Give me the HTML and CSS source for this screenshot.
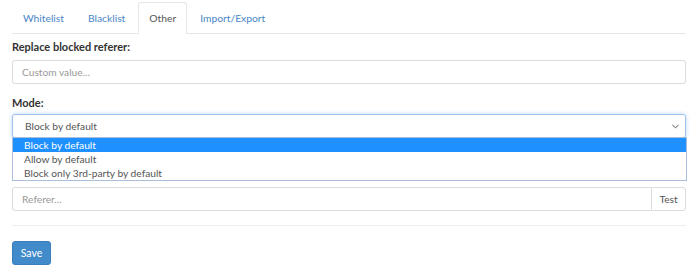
FILE: index.html
```html
<!DOCTYPE html>
<html lang="en">
    <head>
        <meta charset="UTF-8">
        <meta name="viewport" content="width=device-width, initial-scale=1.0">
        <title>Options</title>
        <link rel="stylesheet" href="styles.css">
    </head>
    <body>
        <ul class="tabs">
            <li class="tab"><a href="#">Whitelist</a></li>
            <li class="tab"><a href="#">Blacklist</a></li>
            <li class="tab active"><a href="#">Other</a></li>
            <li class="tab"><a href="#">Import/Export</a></li>
        </ul>

        <div class="pane">
            <label class="label">Replace blocked referer:</label>
            <input class="field" type="text" placeholder="Custom value...">

            <label class="label mode-label">Mode:</label>
            <div class="select-wrap">
                <div class="select">
                    <span>Block by default</span>
                    <svg class="caret" width="7" height="5" viewBox="0 0 7 5"><path d="M0.5 0.8 L3.5 3.8 L6.5 0.8" fill="none" stroke="#888" stroke-width="1.1"/></svg>
                </div>
                <ul class="options">
                    <li class="option selected">Block by default</li>
                    <li class="option">Allow by default</li>
                    <li class="option">Block only 3rd-party by default</li>
                </ul>
            </div>

            <div class="input-group">
                <input class="field" type="text" placeholder="Referer...">
                <button class="addon">Test</button>
            </div>

            <hr class="divider">

            <button class="save">Save</button>
        </div>
    </body>
</html>
```

FILE: styles.css
```css
body {
    margin: 0;
    padding: 0 14px 0 12px;
    font-family: Lato, "Open Sans", Arial, sans-serif;
    font-size: 10.2px;
    color: #555;
    background-color: white;
}

.tabs {
    display: flex;
    list-style: none;
    margin: 0;
    padding: 2px 0 0 0;
    border-bottom: 1px solid #e6e6e6;
}

.tab {
    margin-right: 2px;
    margin-bottom: -1px;
}

.tab a {
    display: block;
    padding: 0 10px;
    height: 30px;
    line-height: 30px;
    font-size: 10.3px;
    color: #4a86c6;
    text-decoration: none;
    border: 1px solid transparent;
    border-radius: 3px 3px 0 0;
}

.tab.active a {
    color: #555;
    border-color: #e6e6e6 #e6e6e6 white;
    background-color: white;
}

.pane {
    display: flex;
    flex-direction: column;
}

.label {
    font-size: 11px;
    font-weight: bold;
    color: #333;
    margin-top: 3px;
    margin-bottom: 3px;
    line-height: 20px;
}

.mode-label {
    margin-top: 9px;
    margin-bottom: 1px;
}

.field {
    box-sizing: border-box;
    height: 24px;
    width: 100%;
    padding: 0 9px;
    font-family: inherit;
    font-size: 10.2px;
    color: #555;
    border: 1px solid #dcdcdc;
    border-radius: 3px;
    outline: none;
}

.field::placeholder {
    color: #999;
}

.select-wrap {
    position: relative;
}

.select {
    box-sizing: border-box;
    height: 24px;
    display: flex;
    align-items: center;
    justify-content: space-between;
    padding: 0 6px 0 12px;
    border: 1px solid #9ec3ea;
    border-radius: 3px;
    box-shadow: 0 0 4px rgba(102, 165, 230, 0.45);
}

.options {
    position: absolute;
    top: 23px;
    left: 0;
    right: -1px;
    margin: 0;
    padding: 0;
    list-style: none;
    background-color: white;
    border: 1px solid #a9bedb;
    z-index: 2;
}

.option {
    height: 14px;
    line-height: 14px;
    padding-left: 11px;
    color: #555;
}

.option.selected {
    background-color: #1e90ff;
    color: white;
}

.input-group {
    display: flex;
    margin-top: 49px;
}

.input-group .field {
    border-radius: 3px 0 0 3px;
}

.addon {
    flex: none;
    box-sizing: border-box;
    height: 24px;
    width: 35px;
    padding: 0;
    font-family: inherit;
    font-size: 10.2px;
    color: #555;
    background-color: white;
    border: 1px solid #dcdcdc;
    border-radius: 0 3px 3px 0;
    margin-left: -1px;
}

.divider {
    width: 100%;
    margin: 14px 0 15px 0;
    border: none;
    border-top: 1px solid #eee;
}

.save {
    align-self: flex-start;
    height: 24px;
    width: 39px;
    padding: 0;
    font-family: inherit;
    font-size: 10.5px;
    color: white;
    background-color: #428bca;
    border: 1px solid #3b7fbd;
    border-radius: 3px;
}
```
